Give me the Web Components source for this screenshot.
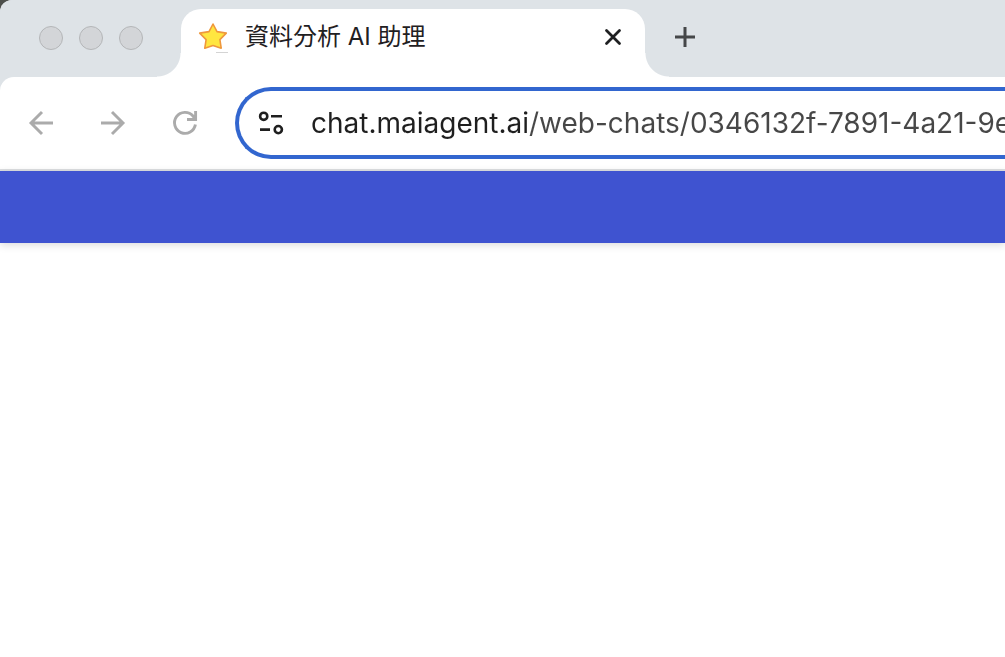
<!DOCTYPE html>
<html lang="zh-Hant">
<head>
<meta charset="UTF-8">
<meta name="viewport" content="width=device-width, initial-scale=1">
<title>資料分析 AI 助理</title>
<style>
    body {
        margin: 0;
        background: #4d4f4b;
        font-family: Inter, "Noto Sans CJK TC", sans-serif;
    }
</style>
</head>
<body>
<browser-window>
    <tab-strip slot="tabs">
        <browser-tab>資料分析 AI 助理</browser-tab>
    </tab-strip>
    <browser-toolbar slot="toolbar">
        <address-bar value="chat.maiagent.ai/web-chats/0346132f-7891-4a21-9e"></address-bar>
    </browser-toolbar>
    <chat-page></chat-page>
</browser-window>

<script>
class BrowserWindow extends HTMLElement {
    connectedCallback() {
        this.attachShadow({ mode: 'open' });
        this.shadowRoot.innerHTML = `
            <style>
                :host {
                    display: flex;
                    flex-direction: column;
                    min-height: 100vh;
                    overflow: hidden;
                    background: #dee3e7;
                    border-radius: 12px 0 0 0;
                }
                main {
                    flex: 1;
                    display: flex;
                    background: #fff;
                }
            </style>
            <slot name="tabs"></slot>
            <slot name="toolbar"></slot>
            <main><slot></slot></main>
        `;
    }
}

class TabStrip extends HTMLElement {
    connectedCallback() {
        this.attachShadow({ mode: 'open' });
        this.shadowRoot.innerHTML = `
            <style>
                :host {
                    display: flex;
                    height: 77px;
                    box-sizing: border-box;
                    padding-top: 9px;
                    background: #dee3e7;
                }
                .lights {
                    display: flex;
                    gap: 16px;
                    padding: 17px 38px 0 39px;
                }
                .lights span {
                    width: 24px;
                    height: 24px;
                    box-sizing: border-box;
                    border: 1px solid #b4b6b8;
                    border-radius: 50%;
                    background: #d3d5d8;
                }
                button {
                    align-self: flex-start;
                    display: flex;
                    margin: 8px 0 0 20px;
                    padding: 0;
                    border: 0;
                    background: none;
                }
            </style>
            <div class="lights"><span></span><span></span><span></span></div>
            <slot></slot>
            <button type="button" aria-label="新增分頁">
                <svg width="40" height="40" viewBox="0 0 40 40" fill="none" stroke="#454749" stroke-width="3">
                    <path d="M10 20h20M20 10v20"/>
                </svg>
            </button>
        `;
    }
}

class BrowserTab extends HTMLElement {
    connectedCallback() {
        this.attachShadow({ mode: 'open' });
        this.shadowRoot.innerHTML = `
            <style>
                :host {
                    position: relative;
                    display: flex;
                    align-items: flex-start;
                    width: 464px;
                    box-sizing: border-box;
                    padding: 12px 20px 0 16px;
                    border-radius: 20px 20px 0 0;
                    background: #fff;
                    color: #1f2022;
                }
                /* curved feet on both sides of the tab */
                :host::before,
                :host::after {
                    content: "";
                    position: absolute;
                    bottom: 0;
                    width: 24px;
                    height: 24px;
                }
                :host::before {
                    right: 100%;
                    background: radial-gradient(circle at 0 0, transparent 23px, #fff 24px);
                }
                :host::after {
                    left: 100%;
                    background: radial-gradient(circle at 100% 0, transparent 23px, #fff 24px);
                }
                .title {
                    flex: 1;
                    padding-left: 16px;
                    font-size: 24px;
                    line-height: 32px;
                    white-space: nowrap;
                }
                button {
                    display: flex;
                    padding: 4px 0;
                    border: 0;
                    background: none;
                }
            </style>
            <svg width="32" height="32" viewBox="0 0 32 32">
                <path d="M16 3l4 7.6 9.3 1.5-6.4 6.5 1.3 8.6L16 24.6l-8.2 2.6 1.3-8.6-6.4-6.5L12 10.6z" fill="#ffe640" stroke="#ef983d" stroke-width="1.6" stroke-linejoin="round"/>
                <path d="M19 31.5h12" stroke="#d4d4d4"/>
            </svg>
            <span class="title"><slot></slot></span>
            <button type="button" aria-label="關閉">
                <svg width="24" height="24" viewBox="0 0 24 24" fill="none" stroke="#1f2022" stroke-width="2.8" stroke-linecap="round">
                    <path d="M5.5 5.5l13 13M18.5 5.5l-13 13"/>
                </svg>
            </button>
        `;
    }
}

class BrowserToolbar extends HTMLElement {
    connectedCallback() {
        this.attachShadow({ mode: 'open' });
        this.shadowRoot.innerHTML = `
            <style>
                :host {
                    display: flex;
                    align-items: center;
                    padding: 10px 0 10px 25px;
                    border-bottom: 2px solid #dddfe1;
                    border-radius: 14px 0 0 0;
                    background: #fff;
                }
                nav {
                    display: flex;
                    gap: 40px;
                    margin-right: 34px;
                }
                button {
                    display: flex;
                    padding: 0;
                    border: 0;
                    background: none;
                }
                svg {
                    fill: none;
                    stroke: #ababab;
                    stroke-width: 2.9;
                }
                ::slotted(address-bar) {
                    flex: 1;
                }
            </style>
            <nav>
                <button type="button" aria-label="上一頁">
                    <svg width="32" height="32" viewBox="0 0 32 32"><path d="M28 16H6M17 5L6 16l11 11"/></svg>
                </button>
                <button type="button" aria-label="下一頁">
                    <svg width="32" height="32" viewBox="0 0 32 32"><path d="M4 16h22M15 5l11 11-11 11"/></svg>
                </button>
                <button type="button" aria-label="重新載入">
                    <svg width="32" height="32" viewBox="0 0 32 32"><path d="M26.4 17.5A10.5 10.5 0 1 1 24 9l2 2.5M26.6 4v8.5H18"/></svg>
                </button>
            </nav>
            <slot></slot>
        `;
    }
}

class AddressBar extends HTMLElement {
    connectedCallback() {
        this.attachShadow({ mode: 'open' });
        this.shadowRoot.innerHTML = `
            <style>
                :host {
                    display: flex;
                    align-items: center;
                    height: 72px;
                    min-width: 0;
                    box-sizing: border-box;
                    padding-left: 16px;
                    border: 4px solid #3266cf;
                    border-right: 0;
                    border-radius: 36px 0 0 36px;
                }
                button {
                    display: flex;
                    padding: 0;
                    border: 0;
                    background: none;
                }
                label {
                    flex: 1;
                    display: flex;
                    min-width: 0;
                    padding-left: 24px;
                }
                /* the host name is painted darker than the path */
                input {
                    flex: 1;
                    min-width: 0;
                    padding: 0;
                    border: 0;
                    outline: 0;
                    font: 28px/36px Inter, sans-serif;
                    color: #474747;
                    background: linear-gradient(90deg, #1f1f1f 217px, #474747 217px);
                    -webkit-background-clip: text;
                    background-clip: text;
                    -webkit-text-fill-color: transparent;
                }
            </style>
            <button type="button" aria-label="查看網站資訊">
                <svg width="32" height="32" viewBox="0 0 32 32" fill="none" stroke="#1f1f1f" stroke-width="2.6">
                    <circle cx="8.7" cy="9.3" r="3.6"/>
                    <path d="M16 9.3h11M5 22.6h10"/>
                    <circle cx="23.3" cy="22.6" r="3.6"/>
                </svg>
            </button>
            <label><input type="text" aria-label="網址" spellcheck="false"></label>
        `;
        this.shadowRoot.querySelector('input').value = this.getAttribute('value');
    }
}

class ChatPage extends HTMLElement {
    connectedCallback() {
        this.attachShadow({ mode: 'open' });
        this.shadowRoot.innerHTML = `
            <style>
                :host {
                    display: block;
                    flex: 1;
                }
                header {
                    height: 72px;
                    background: #3f53d0;
                    box-shadow: 0 2px 8px rgba(0,0,0,0.15);
                }
            </style>
            <header></header>
        `;
    }
}

customElements.define('browser-window', BrowserWindow);
customElements.define('tab-strip', TabStrip);
customElements.define('browser-tab', BrowserTab);
customElements.define('browser-toolbar', BrowserToolbar);
customElements.define('address-bar', AddressBar);
customElements.define('chat-page', ChatPage);
</script>
</body>
</html>
